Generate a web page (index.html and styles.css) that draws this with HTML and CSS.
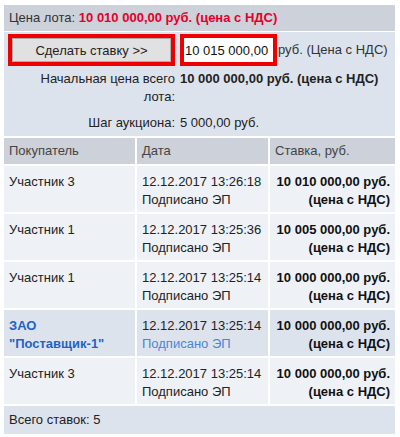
FILE: index.html
```html
<!DOCTYPE html>
<html lang="ru">
<head>
    <meta charset="UTF-8">
    <title>Торги</title>
    <link rel="stylesheet" href="styles.css">
</head>
<body>
    <div class="auction">
        <div class="lot-price">Цена лота: <span class="price-red">10 010 000,00 руб. (цена с НДС)</span></div>

        <div class="bid-form">
            <div class="cell-btn"><button class="bid-btn">Сделать ставку &gt;&gt;</button></div>
            <div class="cell-input">
                <input class="bid-input" type="text" value="10 015 000,00">
                <span class="hint">руб. (Цена с НДС)</span>
            </div>
            <div class="label">Начальная цена всего лота:</div>
            <div class="value"><b>10 000 000,00 руб. (цена с НДС)</b></div>
            <div class="label step">Шаг аукциона:</div>
            <div class="value step">5 000,00 руб.</div>
        </div>

        <table class="bids">
            <thead>
                <tr>
                    <th class="c1">Покупатель</th>
                    <th class="c2">Дата</th>
                    <th class="c3">Ставка, руб.</th>
                </tr>
            </thead>
            <tbody>
                <tr>
                    <td>Участник 3</td>
                    <td>12.12.2017 13:26:18<br>Подписано ЭП</td>
                    <td class="sum">10 010 000,00 руб.<br>(цена с НДС)</td>
                </tr>
                <tr>
                    <td>Участник 1</td>
                    <td>12.12.2017 13:25:36<br>Подписано ЭП</td>
                    <td class="sum">10 005 000,00 руб.<br>(цена с НДС)</td>
                </tr>
                <tr>
                    <td>Участник 1</td>
                    <td>12.12.2017 13:25:14<br>Подписано ЭП</td>
                    <td class="sum">10 000 000,00 руб.<br>(цена с НДС)</td>
                </tr>
                <tr class="mine">
                    <td class="me">ЗАО<br>"Поставщик-1"</td>
                    <td>12.12.2017 13:25:14<br><span class="sign">Подписано ЭП</span></td>
                    <td class="sum">10 000 000,00 руб.<br>(цена с НДС)</td>
                </tr>
                <tr>
                    <td>Участник 3</td>
                    <td>12.12.2017 13:25:14<br>Подписано ЭП</td>
                    <td class="sum">10 000 000,00 руб.<br>(цена с НДС)</td>
                </tr>
            </tbody>
            <tfoot>
                <tr>
                    <td colspan="3">Всего ставок: 5</td>
                </tr>
            </tfoot>
        </table>
    </div>
</body>
</html>
```

FILE: styles.css
```css
body {
    margin: 0;
    background: #fff;
    font-family: Arial, "Liberation Sans", sans-serif;
    font-size: 13px;
    color: #222;
}

.auction {
    width: 391px;
    margin: 5px 0 0 4px;
    display: flex;
    flex-direction: column;
    gap: 1px;
}

.lot-price {
    background: #cdd1d9;
    height: 26px;
    line-height: 26px;
    padding-left: 5px;
    color: #333;
}

.price-red {
    color: #e4002b;
    font-weight: bold;
}

.bid-form {
    background: #dde3ec;
    display: grid;
    grid-template-columns: 167px 1fr;
    column-gap: 5px;
    row-gap: 4px;
    padding: 2px 0 4px 4px;
    line-height: 18px;
}

.cell-btn {
    border: 4px solid #ee0000;
    height: 24px;
}

.bid-btn {
    width: 100%;
    height: 24px;
    margin: 0;
    padding: 0;
    background: #e1e1e1;
    border: 1px solid #adadad;
    font-family: inherit;
    font-size: 13px;
    color: #222;
}

.cell-input {
    display: flex;
    align-items: center;
}

.bid-input {
    width: 86px;
    height: 24px;
    margin: 0;
    padding: 0 2px 0 1px;
    border: 4px solid #ee0000;
    box-sizing: content-box;
    font-family: inherit;
    font-size: 13px;
    color: #111;
    background: #fff;
    outline: none;
}

.hint {
    margin-left: 1px;
    color: #333;
    white-space: nowrap;
}

.label {
    text-align: right;
    color: #222;
}

.value {
    color: #222;
}

.step {
    margin-top: 4px;
}

.bids {
    border-collapse: separate;
    border-spacing: 0 2px;
    margin-top: -1px;
    width: 391px;
    table-layout: fixed;
}

.bids th,
.bids td {
    text-align: left;
    vertical-align: top;
    line-height: 18px;
    padding: 7px 5px 3px;
    background: #eef1f5;
    border-left: 2px solid #fff;
}

.bids th:first-child,
.bids td:first-child {
    border-left: none;
}

.bids th {
    background: #cdd1d9;
    font-weight: normal;
    color: #444;
    height: 17px;
    padding: 4px 5px;
}

.c1 { width: 121px; }
.c2 { width: 121px; }

.bids .sum {
    text-align: right;
    font-weight: bold;
    color: #111;
    white-space: nowrap;
    padding: 7px 5px 3px 0;
}

.bids tr.mine td {
    background: #dde3ec;
}

.me {
    color: #1f63c7;
    font-weight: bold;
}

.sign {
    color: #4a86d8;
}

.bids tfoot td {
    background: #dde3ec;
    padding: 5px 5px;
    height: 18px;
}
```
